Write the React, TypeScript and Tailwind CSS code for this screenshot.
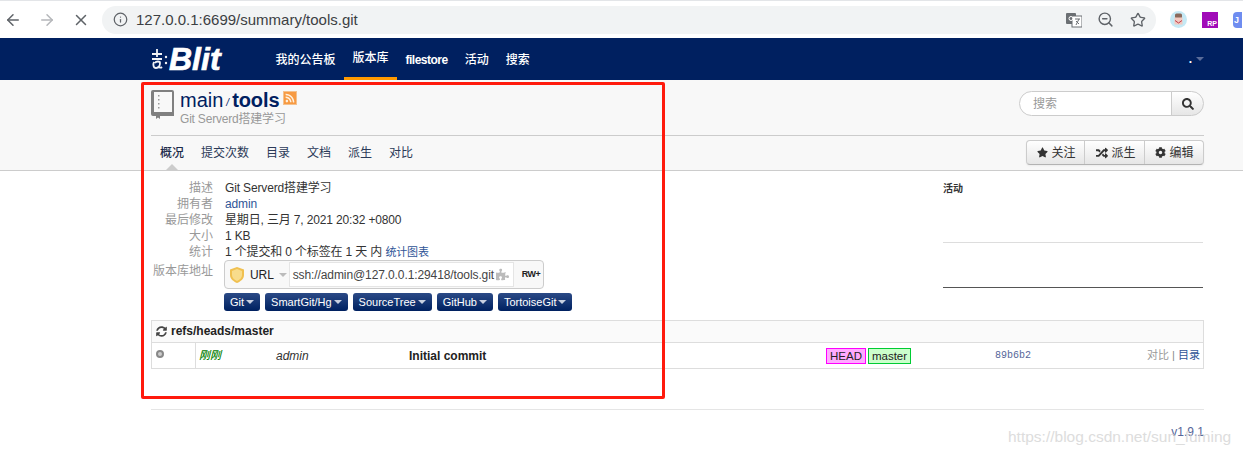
import { ArrowLeft, ArrowRight, X, Info, ZoomOut, Star } from 'lucide-react'
import { FaSearch, FaStar, FaRandom, FaCog, FaSyncAlt, FaRss, FaPuzzlePiece } from 'react-icons/fa'

const font = { fontFamily: '"Liberation Sans", "Noto Sans CJK SC", sans-serif' }

const navItems = [
  { label: '我的公告板' },
  { label: '版本库', active: true },
  { label: 'filestore', narrow: true },
  { label: '活动' },
  { label: '搜索' },
]

const tabs = ['概况', '提交次数', '目录', '文档', '派生', '对比']

const cloneButtons = ['Git', 'SmartGit/Hg', 'SourceTree', 'GitHub', 'TortoiseGit']

function Caret({ color = 'border-t-white' }: { color?: string }) {
  return <span className={`ml-1 inline-block w-0 h-0 border-x-[4px] border-x-transparent border-t-[4px] ${color}`} />
}

function BrowserBar() {
  return (
    <div className="h-[38px] bg-white flex items-center pl-[5px] border-t border-t-[#e3e5e8]">
      <ArrowLeft className="w-[18px] h-[18px] text-[#5f6368] ml-[-1px]" strokeWidth={2} />
      <ArrowRight className="w-[18px] h-[18px] text-[#b5b7ba] ml-[16px]" strokeWidth={2} />
      <X className="w-[18px] h-[18px] text-[#5f6368] ml-[16px]" strokeWidth={2} />
      <div className="ml-[12px] w-[1054px] h-[28px] rounded-full bg-[#f1f3f4] flex items-center pl-[11px] pr-[10px]">
        <Info className="w-[15px] h-[15px] text-[#5f6368]" strokeWidth={2} />
        <span className="ml-[8px] text-[15px] leading-[20px] pt-[1px] text-[#3c4043]">127.0.0.1:6699/summary/tools.git</span>
        <div className="ml-auto flex items-center">
          <svg width="16" height="16" viewBox="0 0 16 16">
            <rect x="0" y="1" width="10" height="11" rx="1" fill="#6b6f73" />
            <rect x="6" y="4" width="10" height="11" fill="#fff" stroke="#6b6f73" />
            <circle cx="5" cy="6.500" r="2" fill="none" stroke="#fff" />
            <path d="M9 7h5M13 7l-3 6M10 9l3 3" stroke="#6b6f73" fill="none" />
          </svg>
          <ZoomOut className="w-[17px] h-[17px] ml-[15px] text-[#5f6368]" strokeWidth={2} />
          <Star className="w-[16px] h-[16px] ml-[16px] text-[#5f6368]" strokeWidth={2} />
        </div>
      </div>
      <svg width="17" height="17" viewBox="0 0 17 17" className="ml-[14px]">
        <circle cx="8.500" cy="8.500" r="8.500" fill="#c5e9f5" />
        <rect x="5" y="2.500" width="7" height="5" rx="1.500" fill="#8a6a5c" />
        <rect x="4.500" y="6.500" width="8" height="7" fill="#f2c9c0" />
        <path d="M5 9.500l3.500 2.500 3.500-2.500" stroke="#c23c4a" fill="none" />
      </svg>
      <span className="ml-[15px] w-[16px] h-[16px] bg-[#a10bb8] text-white text-[7px] font-bold flex items-end justify-end leading-none pb-[1px] pr-[1px]">RP</span>
      <span className="ml-[15px] w-[9px] h-[16px] bg-[#6f8df0] rounded-l-sm text-white text-[9px] font-bold leading-[16px] pl-[1px] overflow-hidden">J</span>
    </div>
  )
}

function Navbar() {
  return (
    <div className="h-[42px] bg-[#002060] flex items-stretch pl-[151px] pr-[39px] text-white">
      <div className="flex items-center w-[116px] shrink-0">
        <svg width="17" height="24" viewBox="0 0 17 24" fill="none" stroke="#f1f3f7" strokeWidth="1.800">
          <path d="M1 7h10M6 2v8M1 12h10M3 15c-1 2-1 6 2 6s4-3 4-5-4-2-5 0M7 19c1 2 3 2 4 1" />
          <circle cx="15" cy="10" r="1.200" fill="#f1f3f7" stroke="none" />
          <circle cx="15" cy="16" r="1.200" fill="#f1f3f7" stroke="none" />
        </svg>
        <span className="text-[32px] leading-none font-bold italic text-white ml-[1px]" style={{ WebkitTextStroke: '0.7px white' }}>Blit</span>
      </div>
      <div className="flex items-stretch">
        {navItems.map((item) => (
          <div
            key={item.label}
            className={`px-[8.500px] flex items-center text-[12px] pt-[1px] ${item.narrow ? 'font-bold tracking-[-0.5px]' : 'font-medium'} ${item.active ? 'border-b-[3px] border-b-[#ff9900]' : ''}`}
          >
            {item.label}
          </div>
        ))}
      </div>
      <div className="ml-auto flex items-center text-[12px] pb-[1px]">
        <span className="font-bold">.</span>
        <Caret color="border-t-[#5a6c99]" />
      </div>
    </div>
  )
}

function BookIcon() {
  return (
    <svg width="23" height="29" viewBox="0 0 23 29" className="shrink-0">
      <path d="M2 0h19a2 2 0 0 1 2 2v24H9v3l-2-1.500L5 29v-3H2a2 2 0 0 1-2-2V2a2 2 0 0 1 2-2z" fill="#808080" />
      <rect x="3" y="2" width="18" height="20" fill="#f8f8f8" />
      <rect x="7" y="5" width="1.500" height="1.500" fill="#999" />
      <rect x="7" y="9" width="1.500" height="1.500" fill="#999" />
      <rect x="7" y="13" width="1.500" height="1.500" fill="#999" />
      <rect x="7" y="17" width="1.500" height="1.500" fill="#999" />
    </svg>
  )
}

function PageHeader() {
  return (
    <div className="bg-[#f8f8f8] border-b border-b-[#ccc] h-[91px]">
      <div className="w-[1053px] ml-[151px]">
        <div className="h-[56px] border-b border-b-[#ccc] flex pt-[10px]">
          <BookIcon />
          <div className="ml-[6px]">
            <div className="flex items-center h-[20px] text-[#002060]">
              <span className="text-[20px] leading-none">main</span>
              <span className="text-[10px] mx-[3px] mt-[4px] italic">/</span>
              <span className="text-[20px] leading-none font-bold tracking-[-0.1px]">tools</span>
              <span className="ml-[4px] w-[14px] h-[14px] bg-[#f79a42] border border-[#f4c18e] flex items-center justify-center mt-[-4px]">
                <FaRss className="w-[10px] h-[10px] text-[#fff1df]" />
              </span>
            </div>
            <div className="text-[12px] text-[#999] leading-[16px] mt-[1px] tracking-[-0.2px]">Git Serverd搭建学习</div>
          </div>
          <div className="ml-auto flex mt-[1px] h-[25px] self-start">
            <div className="w-[153px] h-full bg-white border border-[#ccc] rounded-l-full pl-[13px] text-[12px] leading-[24px] text-[#999]">搜索</div>
            <div className="w-[33px] h-full ml-[-1px] bg-gradient-to-b from-white to-[#e6e6e6] border border-[#ccc] rounded-r-full flex items-center justify-center">
              <FaSearch className="w-[12px] h-[12px] text-[#333]" />
            </div>
          </div>
        </div>
        <div className="flex h-[34px]">
          <div className="flex pl-[9px] gap-[17px]">
            {tabs.map((t, i) => (
              <div key={t} className={`relative pt-[9px] text-[12px] leading-[16px] ${i === 0 ? 'text-[#1c2b4a] font-medium' : 'text-[#2b3a58]'}`}>
                {t}
                {i === 0 && (
                  <span className="absolute left-[6px] bottom-0 w-0 h-0 border-x-[6px] border-x-transparent border-b-[6px] border-b-[#ccc]" />
                )}
              </div>
            ))}
          </div>
          <div className="ml-auto mt-[4px] h-[25px] flex text-[12px] text-[#333] border border-[#ccc] border-b-[#b3b3b3] rounded-[4px] bg-gradient-to-b from-white to-[#e6e6e6] shadow-[0_1px_2px_rgba(0,0,0,0.05)]">
            <div className="w-[58px] flex items-center justify-center gap-[3px] border-r border-r-[#ccc] pl-[2px]">
              <FaStar className="w-[11px] h-[11px]" />关注
            </div>
            <div className="w-[60px] flex items-center justify-center gap-[3px] border-r border-r-[#ccc] pl-[3px]">
              <FaRandom className="w-[12px] h-[12px]" />派生
            </div>
            <div className="w-[58px] flex items-center justify-center gap-[3px] pl-[1px]">
              <FaCog className="w-[11px] h-[11px]" />编辑
            </div>
          </div>
        </div>
      </div>
    </div>
  )
}

function Row({ label, children }: { label: string; children: React.ReactNode }) {
  return (
    <div className="flex h-[16px] leading-[16px]">
      <div className="w-[62px] text-right text-[#999] shrink-0">{label}</div>
      <div className="ml-[12px] text-[#333] whitespace-nowrap tracking-[-0.15px]">{children}</div>
    </div>
  )
}

function Summary() {
  return (
    <div className="flex h-[149px] pt-[9px] text-[12px]">
      <div className="w-[792px]">
        <Row label="描述">Git Serverd搭建学习</Row>
        <Row label="拥有者"><span className="text-[#2f5597]">admin</span></Row>
        <Row label="最后修改">星期日, 三月 7, 2021 20:32 +0800</Row>
        <Row label="大小">1 KB</Row>
        <Row label="统计">
          1 个提交和 0 个标签在 1 天 内 <span className="text-[#2f5597] text-[11px]">统计图表</span>
        </Row>
        <div className="flex">
          <div className="w-[62px] text-right text-[#999] leading-[16px] pt-[3px] shrink-0 whitespace-nowrap">版本库地址</div>
          <div className="ml-[11px]">
            <div className="w-[320px] h-[29px] border border-[#ccc] rounded-[4px] bg-[#f8f8f8] flex items-center pl-[5px]">
              <svg width="14" height="16" viewBox="0 0 14 16">
                <path d="M7 0l7 2.500V8c0 4-3.500 6.500-7 8-3.500-1.500-7-4-7-8V2.500z" fill="#f0c050" />
                <path d="M7 2l5 2v4c0 3-2.500 4.800-5 6-2.500-1.200-5-3-5-6V4z" fill="#f8dc8c" />
              </svg>
              <span className="ml-[6px] text-[#222] tracking-[-0.1px]">URL</span>
              <Caret color="border-t-[#bbb] ml-[5px]" />
              <div className="ml-[2px] w-[225px] h-[25px] bg-white border border-[#e5e5e5] flex items-center pl-[3px] text-[#444] whitespace-nowrap tracking-[-0.1px]">
                ssh://admin@127.0.0.1:29418/tools.git
                <FaPuzzlePiece className="w-[13px] h-[13px] text-[#bbb] ml-[2px] shrink-0" />
              </div>
              <span className="ml-[8px] text-[9px] font-bold text-[#222] tracking-[-0.5px]">RW+</span>
            </div>
            <div className="flex gap-[5px] mt-[4px]">
              {cloneButtons.map((b) => (
                <div
                  key={b}
                  className="h-[18px] px-[6px] rounded-[3px] bg-gradient-to-b from-[#2b4a86] to-[#002060] text-white text-[11px] flex items-center whitespace-nowrap"
                >
                  {b}
                  <Caret color="border-t-[#c8d0e0] ml-[2px]" />
                </div>
              ))}
            </div>
          </div>
        </div>
      </div>
      <div className="w-[260px]">
        <div className="text-[10px] font-bold text-[#333] leading-[16px] pt-[1px]">活动</div>
        <div className="h-[46px] border-b border-b-[#ddd]" />
        <div className="h-[45px] border-b border-b-[#555]" />
      </div>
    </div>
  )
}

function Branch() {
  return (
    <div className="border border-[#ddd] text-[12px]">
      <div className="h-[22px] bg-[#fafafa] border-b border-b-[#ddd] flex items-center pl-[4px] pb-[1px] font-bold text-[#222]">
        <FaSyncAlt className="w-[11px] h-[11px] text-[#444]" />
        <span className="ml-[4px]">refs/heads/master</span>
      </div>
      <div className="h-[25px] flex items-center relative">
        <div className="w-[44px] h-full border-r border-r-[#ddd] flex pl-[4px] pt-[7px] shrink-0">
          <span className="w-[8px] h-[8px] rounded-full border-[2px] border-[#888] bg-[#ccc]" />
        </div>
        <div className="ml-[3px] w-[77px] italic text-[#008000] text-[11px] font-medium">刚刚</div>
        <div className="w-[133px] italic text-[#333]">admin</div>
        <div className="w-[417px] font-bold text-[#222]">Initial commit</div>
        <span className="w-[40px] h-[16px] border border-[#ff00ff] bg-[#ffaaff] text-[#222] text-center leading-[14px] text-[11.500px]">HEAD</span>
        <span className="ml-[2px] w-[43px] h-[16px] border border-[#00cc33] bg-[#ccffcc] text-[#222] text-center leading-[14px] text-[11.500px]">master</span>
        <span className="ml-[84px] text-[10px] text-[#556699]" style={{ fontFamily: '"Liberation Mono", monospace' }}>89b6b2</span>
        <span className="ml-auto pr-[3px] text-[#999] text-[11px]">
          对比 <span className="text-[#888]">|</span> <span className="text-[#2f5597]">目录</span>
        </span>
      </div>
    </div>
  )
}

export default function App() {
  return (
    <div className="relative w-[1243px] h-[455px] overflow-hidden bg-white" style={font}>
      <BrowserBar />
      <Navbar />
      <PageHeader />
      <div className="w-[1053px] ml-[151px]">
        <Summary />
        <Branch />
        <div className="mt-[40px] border-t border-t-[#e5e5e5] text-right text-[12px] text-[#556699] pt-[14px] leading-[16px]">v1.9.1</div>
      </div>

      {/* annotation and watermark sit on top of the screenshot */}
      <div className="absolute left-[141px] top-[82px] w-[524px] h-[317px] border-[3px] border-[#ff1a0d] rounded-[2px] pointer-events-none" />
      <div className="absolute left-[1008px] top-[425px] text-[15.500px] leading-[24px] text-[#d5d5d5] opacity-80 whitespace-nowrap">
        https://blog.csdn.net/sun_fuming
      </div>
    </div>
  )
}
